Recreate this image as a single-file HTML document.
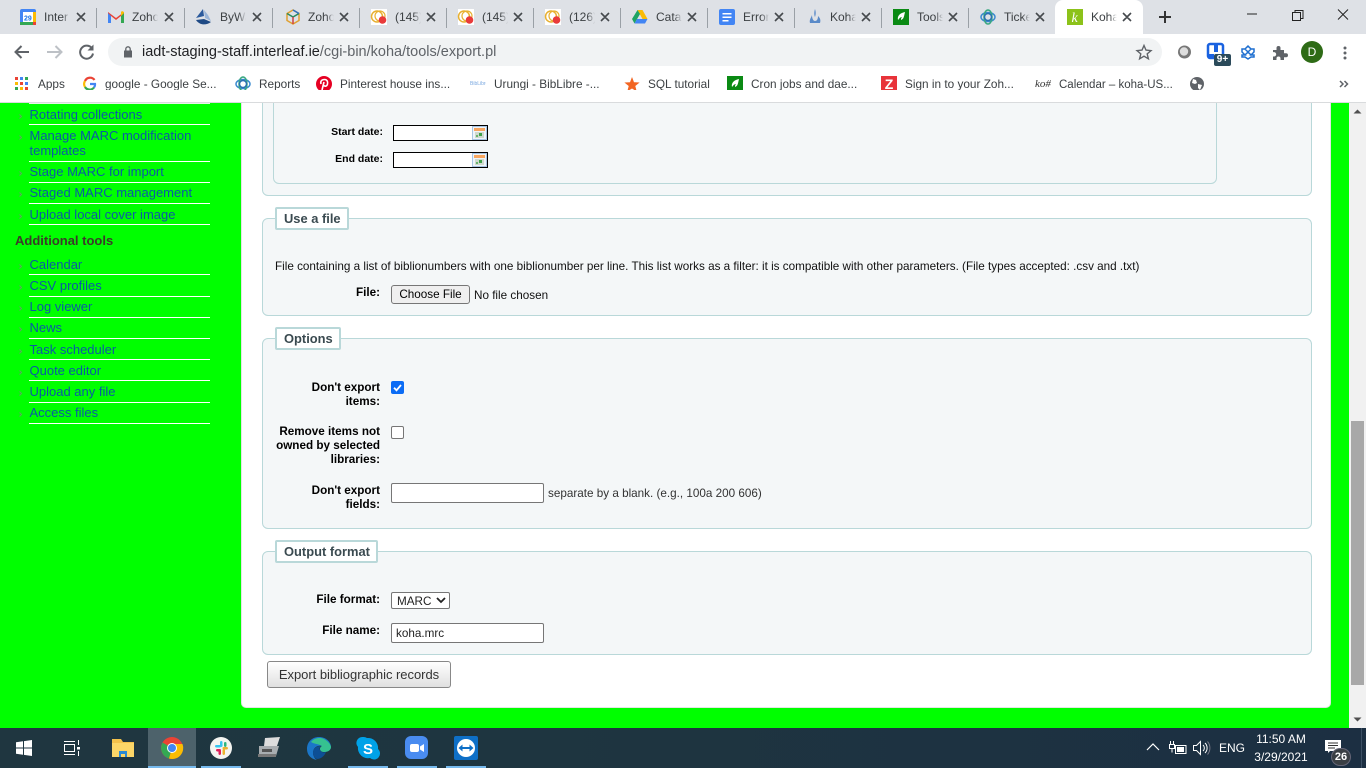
<!DOCTYPE html>
<html><head><meta charset="utf-8"><style>
*{box-sizing:border-box}
html,body{margin:0;padding:0;width:1366px;height:768px;overflow:hidden;background:#0f0;font-family:"Liberation Sans",sans-serif}
.a{position:absolute}
.t{position:absolute;white-space:nowrap}
svg{position:absolute;overflow:visible}
.tt{position:absolute;top:10px;font-size:12px;color:#3c4043;white-space:nowrap;width:26px;overflow:hidden;-webkit-mask-image:linear-gradient(90deg,#000 70%,transparent);mask-image:linear-gradient(90deg,#000 70%,transparent);line-height:15px}
.sep{position:absolute;top:8px;width:1px;height:20px;background:#9aa0a6}
.b{position:absolute;top:76px;font-size:11.8px;color:#3c4043;white-space:nowrap;line-height:16px}
.nav{position:absolute;left:29.5px;font-size:13px;line-height:15px;color:#0a5aa5;white-space:nowrap}
.ln{position:absolute;left:29px;width:181px;height:1px;background:#fff}
.fs{position:absolute;left:262px;width:1050px;background:#f4f7f8;border:1px solid #b9d8d9;border-radius:6px}
.lg{position:absolute;background:#fff;border:2px solid #b9d8d9;border-radius:2px;font-size:12.9px;font-weight:bold;color:#3a4a50;height:23px;line-height:19px;padding:0 6px 0 7px;white-space:nowrap}
.lb{position:absolute;font-size:11.7px;font-weight:bold;color:#000;text-align:right;white-space:nowrap;line-height:14px}
.in{position:absolute;background:#fff;border:1px solid #767676;border-radius:2px;height:20px;font-size:11.7px;color:#222;line-height:20px;padding-left:4px}
</style></head><body>

<!-- tab strip -->
<div class="a" style="left:0;top:0;width:1366px;height:34px;background:#dee1e6"></div>
<div class="sep" style="left:96px"></div><div class="sep" style="left:184px"></div><div class="sep" style="left:272px"></div><div class="sep" style="left:359px"></div><div class="sep" style="left:446px"></div><div class="sep" style="left:533px"></div><div class="sep" style="left:620px"></div><div class="sep" style="left:707px"></div><div class="sep" style="left:794px"></div><div class="sep" style="left:881px"></div><div class="sep" style="left:968px"></div>
<div class="a" style="left:1055px;top:0;width:88px;height:34px;background:#fff;border-radius:8px 8px 0 0"></div>

<div class="tt" style="left:44px">Inter</div>
<div class="tt" style="left:132px">Zoho</div>
<div class="tt" style="left:220px">ByWa</div>
<div class="tt" style="left:308px">Zoho</div>
<div class="tt" style="left:395px">(145)</div>
<div class="tt" style="left:482px">(145)</div>
<div class="tt" style="left:569px">(126)</div>
<div class="tt" style="left:656px">Catal</div>
<div class="tt" style="left:743px">Error</div>
<div class="tt" style="left:830px">Koha</div>
<div class="tt" style="left:917px">Tools</div>
<div class="tt" style="left:1004px">Ticke</div>
<div class="tt" style="left:1091px">Koha</div>

<!-- close icons -->
<svg style="left:0;top:0" width="1366" height="34" fill="none" stroke="#45494d" stroke-width="1.6">
<path d="M77 13l8 8m0-8l-8 8M165 13l8 8m0-8l-8 8M253 13l8 8m0-8l-8 8M340 13l8 8m0-8l-8 8M427 13l8 8m0-8l-8 8M514 13l8 8m0-8l-8 8M601 13l8 8m0-8l-8 8M688 13l8 8m0-8l-8 8M775 13l8 8m0-8l-8 8M862 13l8 8m0-8l-8 8M949 13l8 8m0-8l-8 8M1036 13l8 8m0-8l-8 8M1123 13l8 8m0-8l-8 8"/>
<path d="M1165 11v12M1159 17h12" stroke="#333" stroke-width="2"/>
<path d="M1247 14h10" stroke="#222" stroke-width="1"/>
<path d="M1292.500 12.500h8v8h-8zM1295 12.500v-2h8v8h-2" stroke="#222" stroke-width="1"/>
<path d="M1338 9.500l10 10m0-10l-10 10" stroke="#222" stroke-width="1"/>
</svg>

<!-- favicons -->
<svg style="left:20px;top:9px" width="16" height="16"><rect width="16" height="16" rx="2" fill="#4285f4"/><rect x="3" y="3" width="10" height="10" fill="#fff"/><rect y="13" width="13" height="3" fill="#34a853"/><rect x="13" y="3" width="3" height="10" fill="#fbbc04"/><rect x="13" y="13" width="3" height="3" fill="#ea4335"/><text x="4" y="11.500" font-size="7" font-weight="bold" fill="#1a73e8" font-family="Liberation Sans">29</text></svg>
<svg style="left:108px;top:11px" width="16" height="12"><path d="M0 12V1l8 6 8-6v11h-3V5L8 9 3 5v7z" fill="#ea4335"/><path d="M0 12V2l3 3v7z" fill="#4285f4"/><path d="M13 12V5l3-3v10z" fill="#34a853"/><path d="M13 5l3-3V1l-2-1-1 1z" fill="#fbbc04"/></svg>
<svg style="left:196px;top:9px" width="16" height="16"><path d="M0 9L7 0l1 7z" fill="#2b5a9c"/><path d="M8 1l4 5 3 6-6-3z" fill="#9ab5d8"/><path d="M0 11l8-1 7 3c-4 3-11 4-15-2z" fill="#1f4a85"/></svg>
<svg style="left:285px;top:9px" width="16" height="16" fill="none" stroke-width="1.500"><path d="M8 1l6 3.500v7L8 15l-6-3.500v-7z" stroke="#e0a030"/><path d="M2 4.500L8 8l6-3.500" stroke="#2a8a60"/><path d="M8 8v7" stroke="#d04040"/><path d="M8 1l6 3.500" stroke="#3070c0"/></svg>
<svg style="left:371px;top:9px" width="16" height="16"><rect width="16" height="16" fill="#fff"/><circle cx="6" cy="7.500" r="5.500" fill="none" stroke="#e8b030" stroke-width="1.500"/><circle cx="9" cy="7" r="5" fill="none" stroke="#e8b030" stroke-width="1.200"/><circle cx="11.500" cy="11" r="3.800" fill="#e93a3a"/></svg>
<svg style="left:458px;top:9px" width="16" height="16"><rect width="16" height="16" fill="#fff"/><circle cx="6" cy="7.500" r="5.500" fill="none" stroke="#e8b030" stroke-width="1.500"/><circle cx="9" cy="7" r="5" fill="none" stroke="#e8b030" stroke-width="1.200"/><circle cx="11.500" cy="11" r="3.800" fill="#e93a3a"/></svg>
<svg style="left:545px;top:9px" width="16" height="16"><rect width="16" height="16" fill="#fff"/><circle cx="6" cy="7.500" r="5.500" fill="none" stroke="#e8b030" stroke-width="1.500"/><circle cx="9" cy="7" r="5" fill="none" stroke="#e8b030" stroke-width="1.200"/><circle cx="11.500" cy="11" r="3.800" fill="#e93a3a"/></svg>
<svg style="left:632px;top:9px" width="16" height="15"><path d="M5.500 1h5l5 9h-5z" fill="#fbbc04"/><path d="M5.500 1L0 10l2.500 4.500L8 5z" fill="#1fa463"/><path d="M2.500 14.500h10.500l2.500-4.500H5z" fill="#4285f4"/></svg>
<svg style="left:719px;top:9px" width="16" height="16"><rect width="16" height="16" rx="2" fill="#4285f4"/><path d="M3.500 4h9v1.500h-9zM3.500 7.500h9V9h-9zM3.500 11h6v1.500h-6z" fill="#fff"/></svg>
<svg style="left:807px;top:9px" width="16" height="16"><path d="M8 0c1 3 1 5 0 8-1-2-1-5 0-8zM5 6c-1 3-3 5-2 8h10c1-3 0-5-2-7 0 3-1 5-3 5s-3-3-3-6z" fill="#5a8ac8"/></svg>
<svg style="left:893px;top:9px" width="16" height="16"><rect width="16" height="16" fill="#0a8a14"/><path d="M5 11c-1-4 2-7 7-8-1 4-1 7-4 8 0-1 0-2 1-3-2 0-3 2-4 3z" fill="#fff"/></svg>
<svg style="left:980px;top:9px" width="16" height="16" fill="none" stroke-width="1.500"><ellipse cx="8" cy="8" rx="7" ry="4.500" stroke="#3a8ad0"/><ellipse cx="8" cy="8" rx="4" ry="7" stroke="#3aa880"/><circle cx="8" cy="8" r="3.500" stroke="#2a70b0"/></svg>
<svg style="left:1067px;top:9px" width="16" height="16"><rect width="16" height="16" fill="#8cc21a"/><text x="4.500" y="13" font-size="14" font-style="italic" font-family="Liberation Serif" fill="#fff">k</text></svg>

<!-- toolbar -->
<div class="a" style="left:0;top:34px;width:1366px;height:68px;background:#fff"></div>
<svg style="left:0;top:34px" width="110" height="34" fill="none">
<path d="M29 18H16M21.500 12l-6 6 6 6" stroke="#5f6368" stroke-width="2"/>
<path d="M47 18h13M55.500 12l6 6-6 6" stroke="#bdc1c6" stroke-width="2"/>
<path d="M92 14.500a6.500 6.500 0 1 0 1 5" stroke="#5f6368" stroke-width="2"/><path d="M93.500 10.500v6h-6z" fill="#5f6368"/>
</svg>
<div class="a" style="left:108px;top:38px;width:1054px;height:28px;background:#f1f3f4;border-radius:14px"></div>
<svg style="left:122px;top:45px" width="12" height="14"><path d="M2 5.500h8v7H2z" fill="#5f6368"/><path d="M3.800 6V4a2.200 2.200 0 0 1 4.400 0v2" fill="none" stroke="#5f6368" stroke-width="1.300"/></svg>
<div class="t" style="left:142px;top:44px;font-size:14.5px;line-height:17px;color:#202124">iadt-staging-staff.interleaf.ie<span style="color:#5f6368">/cgi-bin/koha/tools/export.pl</span></div>
<svg style="left:1136px;top:44px" width="16" height="16"><path d="M8 1.500l2 4.600 5 .5-3.800 3.300 1.200 4.900L8 12.200l-4.400 2.600 1.200-4.900L1 6.600l5-.5z" fill="none" stroke="#5f6368" stroke-width="1.400"/></svg>
<svg style="left:1177px;top:45px" width="15" height="15"><circle cx="7.500" cy="7" r="6.500" fill="#777"/><circle cx="7" cy="6.500" r="4.200" fill="#ddd"/></svg>
<svg style="left:1207px;top:43px" width="24" height="24"><path d="M3 1h11a2 2 0 0 1 2 2v10a2 2 0 0 1-2 2H3a2 2 0 0 1-2-2V3a2 2 0 0 1 2-2z" fill="none" stroke="#1a62e0" stroke-width="2.500"/><rect x="7" y="2" width="4" height="7" fill="#1a62e0"/><rect x="2" y="11" width="5" height="4" fill="#1a62e0"/></svg>
<div class="a" style="left:1214px;top:54px;width:17px;height:12px;background:#2b4a5a;border-radius:2px;color:#fff;font-size:10px;font-weight:bold;line-height:12px;text-align:center">9+</div>
<svg style="left:1241px;top:45px" width="14" height="14" fill="none" stroke="#1e6fd0" stroke-width="1.500"><path d="M7 1L4 4H1v3l-0 0 3 3-3 0v2h3l3 2 3-2h3v-2l-3 0 3-3V4h-3zM4 4l6 6M10 4L4 10"/></svg>
<svg style="left:1272px;top:45px" width="15" height="15"><path d="M1 5h3.500V3a2 2 0 0 1 4 0v2H12v3.200h2a2 2 0 0 1 0 4h-2V15H8.500v-1.500a2 2 0 0 0-4 0V15H1v-3.500h1a2.200 2.200 0 0 0 0-4.400H1z" fill="#5f6368"/></svg>
<div class="a" style="left:1301px;top:41px;width:22px;height:22px;border-radius:50%;background:#2e6b16;color:#fff;font-size:12px;line-height:22px;text-align:center">D</div>
<svg style="left:1343px;top:45px" width="4" height="16"><circle cx="2" cy="3" r="1.500" fill="#5f6368"/><circle cx="2" cy="8" r="1.500" fill="#5f6368"/><circle cx="2" cy="13" r="1.500" fill="#5f6368"/></svg>

<!-- bookmarks -->
<svg style="left:15px;top:77px" width="14" height="14"><g><rect x="0" y="0" width="3" height="3" fill="#ea4335"/><rect x="5" y="0" width="3" height="3" fill="#4285f4"/><rect x="10" y="0" width="3" height="3" fill="#34a853"/><rect x="0" y="5" width="3" height="3" fill="#fbbc04"/><rect x="5" y="5" width="3" height="3" fill="#ea4335"/><rect x="10" y="5" width="3" height="3" fill="#4285f4"/><rect x="0" y="10" width="3" height="3" fill="#34a853"/><rect x="5" y="10" width="3" height="3" fill="#fbbc04"/><rect x="10" y="10" width="3" height="3" fill="#ea4335"/></g></svg>
<div class="b" style="left:38px">Apps</div>
<svg style="left:83px;top:77px" width="13" height="14" fill="none" stroke-width="2.200"><path d="M11.500 3A5.500 5.500 0 0 0 2 4" stroke="#ea4335"/><path d="M2 4a5.800 5.800 0 0 0 0 6" stroke="#fbbc04"/><path d="M2 10a5.500 5.500 0 0 0 9 .5" stroke="#34a853"/><path d="M11 10.500a5 5 0 0 0 1-3.500H7" stroke="#4285f4"/></svg>
<div class="b" style="left:105px">google - Google Se...</div>
<svg style="left:235px;top:76px" width="16" height="16" fill="none" stroke-width="1.500"><ellipse cx="8" cy="8" rx="7" ry="4.500" stroke="#3a8ad0"/><ellipse cx="8" cy="8" rx="4" ry="7" stroke="#3aa880"/><circle cx="8" cy="8" r="3.500" stroke="#2a70b0"/></svg>
<div class="b" style="left:259px">Reports</div>
<svg style="left:316px;top:76px" width="16" height="16"><circle cx="8" cy="8" r="8" fill="#e60023"/><path d="M6 14l2-8M5 8c-1-3 1-4.500 3.500-4.500S12 5.500 11.500 8 9 10.500 7.800 9.500" fill="none" stroke="#fff" stroke-width="1.600"/></svg>
<div class="b" style="left:340px">Pinterest house ins...</div>
<div class="a" style="left:470px;top:80px;width:16px;height:8px;font-size:5px;color:#7aa8e0;line-height:8px;white-space:nowrap;overflow:hidden">BibLibre</div>
<div class="b" style="left:494px">Urungi - BibLibre -...</div>
<svg style="left:624px;top:77px" width="16" height="15"><path d="M8 0l2 5.200 5.600.3-4.300 3.500 1.400 5.400L8 11.500l-4.700 2.900 1.400-5.400L.4 5.500 6 5.200z" fill="#f26522"/></svg>
<div class="b" style="left:648px">SQL tutorial</div>
<svg style="left:727px;top:76px" width="16" height="16"><rect width="16" height="16" fill="#0a8a14"/><path d="M5 11c-1-4 2-7 7-8-1 4-1 7-4 8 0-1 0-2 1-3-2 0-3 2-4 3z" fill="#fff"/></svg>
<div class="b" style="left:751px">Cron jobs and dae...</div>
<div class="a" style="left:881px;top:76px;width:16px;height:16px;background:#e8333a;color:#fff;font-size:14px;font-weight:bold;line-height:16px;text-align:center">Z</div>
<div class="b" style="left:905px">Sign in to your Zoh...</div>
<div class="a" style="left:1035px;top:76px;width:16px;height:16px;font-size:11px;font-style:italic;color:#333;line-height:16px;overflow:hidden;font-family:'Liberation Serif',serif;white-space:nowrap">ko#k</div>
<div class="b" style="left:1059px;font-size:11.5px;top:77px">Calendar – koha-US...</div>
<svg style="left:1190px;top:77px" width="14" height="14"><circle cx="7" cy="7" r="7" fill="#5f6368"/><path d="M3 2l3 1 1 3-2 1-3-1zM8 7l4 1-2 5-2-2z" fill="#fff"/></svg>
<svg style="left:1339px;top:80px" width="10" height="8" fill="none" stroke="#5f6368" stroke-width="1.500"><path d="M1 1l3 3-3 3M5.500 1l3 3-3 3"/></svg>

<!-- sidebar -->
<div class="ln" style="top:103px;background:#e6f8e6"></div>
<div class="nav" style="top:107px">Rotating collections</div><div class="ln" style="top:124px"></div>
<div class="nav" style="top:128px">Manage MARC modification<br>templates</div><div class="ln" style="top:161px"></div>
<div class="nav" style="top:164px">Stage MARC for import</div><div class="ln" style="top:182px"></div>
<div class="nav" style="top:185px">Staged MARC management</div><div class="ln" style="top:203px"></div>
<div class="nav" style="top:207px">Upload local cover image</div><div class="ln" style="top:224px"></div>
<div class="t" style="left:15px;top:233px;font-size:13px;line-height:15px;font-weight:bold;color:#3d3a2a">Additional tools</div>
<div class="nav" style="top:257px">Calendar</div><div class="ln" style="top:274px"></div>
<div class="nav" style="top:278px">CSV profiles</div><div class="ln" style="top:296px"></div>
<div class="nav" style="top:299px">Log viewer</div><div class="ln" style="top:317px"></div>
<div class="nav" style="top:320px">News</div><div class="ln" style="top:338px"></div>
<div class="nav" style="top:342px">Task scheduler</div><div class="ln" style="top:359px"></div>
<div class="nav" style="top:363px">Quote editor</div><div class="ln" style="top:380px"></div>
<div class="nav" style="top:384px">Upload any file</div><div class="ln" style="top:402px"></div>
<div class="nav" style="top:405px">Access files</div><div class="ln" style="top:423px"></div>
<svg style="left:0;top:0" width="30" height="430" fill="none" stroke="#5fa55f" stroke-width="1"><path d="M19.500 114.500l2 2-2 2M19.500 135.500l2 2-2 2M19.500 171.500l2 2-2 2M19.500 192.500l2 2-2 2M19.500 214.500l2 2-2 2M19.500 264.500l2 2-2 2M19.500 285.500l2 2-2 2M19.500 306.500l2 2-2 2M19.500 327.500l2 2-2 2M19.500 349.500l2 2-2 2M19.500 370.500l2 2-2 2M19.500 391.500l2 2-2 2M19.500 412.500l2 2-2 2"/></svg>

<!-- main panel -->
<div class="a" style="left:241px;top:103px;width:1090px;height:605px;background:#fff;border-radius:0 0 5px 5px;border:1px solid #e4e4e4;border-top:0"></div>

<div class="fs" style="top:90px;height:106px"></div>
<div class="a" style="left:273px;top:90px;width:944px;height:94px;border:1px solid #b9d8d9;border-radius:6px"></div>
<div class="a" style="left:0;top:90px;width:1366px;height:12px;background:#fff"></div>
<div class="a" style="left:0;top:102px;width:1366px;height:1px;background:#d9dbdd"></div>
<div class="lb" style="left:300px;width:83px;top:125px;font-size:10.5px">Start date:</div>
<div class="lb" style="left:300px;width:83px;top:152px;font-size:10.5px">End date:</div>
<div class="a" style="left:393px;top:125px;width:95px;height:16px;background:#fff;border:1px solid #000"></div>
<div class="a" style="left:393px;top:152px;width:95px;height:16px;background:#fff;border:1px solid #000"></div>
<svg style="left:472px;top:126px" width="15" height="14"><rect x=".5" y=".5" width="14" height="13" fill="#eef4fa" stroke="#a9c6e4"/><rect x="2" y="2" width="11" height="3" fill="#f7a660"/><rect x="3" y="6" width="9" height="6" fill="#cfd9cf"/><rect x="7" y="7" width="3" height="3" fill="#3fa24a"/><rect x="4" y="9" width="2" height="2" fill="#6ab46e"/></svg>
<svg style="left:472px;top:153px" width="15" height="14"><rect x=".5" y=".5" width="14" height="13" fill="#eef4fa" stroke="#a9c6e4"/><rect x="2" y="2" width="11" height="3" fill="#f7a660"/><rect x="3" y="6" width="9" height="6" fill="#cfd9cf"/><rect x="7" y="7" width="3" height="3" fill="#3fa24a"/><rect x="4" y="9" width="2" height="2" fill="#6ab46e"/></svg>

<div class="fs" style="top:218px;height:98px"></div>
<div class="lg" style="left:275px;top:207px">Use a file</div>
<div class="t" style="left:275px;top:260px;font-size:11.7px;line-height:14px;color:#111">File containing a list of biblionumbers with one biblionumber per line. This list works as a filter: it is compatible with other parameters. (File types accepted: .csv and .txt)</div>
<div class="lb" style="left:300px;width:80px;top:286px">File:</div>
<div class="a" style="left:391px;top:285px;width:79px;height:19px;background:#efefef;border:1px solid #767676;border-radius:3px;font-size:11.7px;line-height:18px;text-align:center;color:#000">Choose File</div>
<div class="t" style="left:474px;top:289px;font-size:11.7px;line-height:14px;color:#111">No file chosen</div>

<div class="fs" style="top:338px;height:191px"></div>
<div class="lg" style="left:275px;top:327px">Options</div>
<div class="lb" style="left:270px;width:110px;top:381px">Don't export<br>items:</div>
<svg style="left:391px;top:381px" width="13" height="13"><rect width="13" height="13" rx="2" fill="#0b6cf5"/><path d="M3 6.800l2.500 2.500L10 4" fill="none" stroke="#fff" stroke-width="1.800"/></svg>
<div class="lb" style="left:270px;width:110px;top:425px">Remove items not<br>owned by selected<br>libraries:</div>
<div class="a" style="left:391px;top:426px;width:13px;height:13px;background:#fff;border:1px solid #767676;border-radius:2px"></div>
<div class="lb" style="left:270px;width:110px;top:484px">Don't export<br>fields:</div>
<div class="in" style="left:391px;top:483px;width:153px"></div>
<div class="t" style="left:548px;top:487px;font-size:11.7px;line-height:14px;color:#333">separate by a blank. (e.g., 100a 200 606)</div>

<div class="fs" style="top:551px;height:104px"></div>
<div class="lg" style="left:275px;top:540px">Output format</div>
<div class="lb" style="left:270px;width:110px;top:593px">File format:</div>
<div class="in" style="left:391px;top:592px;width:59px;height:17px;line-height:17px;padding-left:5px">MARC</div>
<svg style="left:436px;top:597px" width="10" height="7"><path d="M1 1l4 4 4-4" fill="none" stroke="#222" stroke-width="1.800"/></svg>
<div class="lb" style="left:270px;width:110px;top:624px">File name:</div>
<div class="in" style="left:391px;top:623px;width:153px">koha.mrc</div>
<div class="a" style="left:267px;top:661px;width:184px;height:27px;background:linear-gradient(#fff,#e0e0e0);border:1px solid #888;border-radius:3px;font-size:13px;line-height:26px;text-align:center;color:#333;letter-spacing:-.03px">Export bibliographic records</div>

<!-- scrollbar -->
<div class="a" style="left:1349px;top:103px;width:17px;height:625px;background:#f1f1f1"></div>
<div class="a" style="left:1351px;top:421px;width:13px;height:264px;background:#a8a8a8"></div>
<svg style="left:1349px;top:103px" width="17" height="625"><path d="M4.500 10.500L8.500 6.500l4 4z" fill="#505050"/><path d="M4.500 614.500l4 4 4-4z" fill="#505050"/></svg>

<!-- taskbar -->
<div class="a" style="left:0;top:728px;width:1366px;height:40px;background:linear-gradient(90deg,#1f3640,#1e3540 40%,#1c2f42)"></div>
<div class="a" style="left:148px;top:728px;width:48px;height:40px;background:#4d626b"></div>
<div class="a" style="left:148px;top:766px;width:48px;height:2px;background:#76b9ed"></div>
<div class="a" style="left:201px;top:766px;width:40px;height:2px;background:#76b9ed"></div>
<div class="a" style="left:348px;top:766px;width:40px;height:2px;background:#76b9ed"></div>
<div class="a" style="left:397px;top:766px;width:40px;height:2px;background:#76b9ed"></div>
<div class="a" style="left:446px;top:766px;width:40px;height:2px;background:#76b9ed"></div>
<svg style="left:16px;top:740px" width="16" height="16"><path d="M0 2.300l7-1v6.200H0zM8 1.100L16 0v7.500H8zM0 8.500h7v6.200l-7-1zM8 8.500h8V16l-8-1.100z" fill="#fff"/></svg>
<svg style="left:64px;top:740px" width="17" height="16" fill="none" stroke="#fff"><path d="M.500 4.500h10v7H.500zM0 1.500h11M0 14.500h11M14.500 0v5M14.500 11v5"/><rect x="13" y="7" width="3" height="2.500" fill="#fff" stroke="none"/></svg>
<svg style="left:112px;top:738px" width="22" height="19"><path d="M0 1h9l2 3h11v15H0z" fill="#f3c14b"/><path d="M0 5h22v14H0z" fill="#fbd668"/><path d="M7 13h8v6H7z" fill="#2a8ad4"/><path d="M9 16h4v3H9z" fill="#fbd668"/></svg>
<svg style="left:161px;top:737px" width="22" height="22"><circle cx="11" cy="11" r="11" fill="#ea4335"/><path d="M11 11L1.500 5.500A11 11 0 0 0 8 21.500z" fill="#34a853"/><path d="M11 11l-3 10.500A11 11 0 0 0 21.500 7H11z" fill="#fbbc04"/><circle cx="11" cy="11" r="5" fill="#fff"/><circle cx="11" cy="11" r="4" fill="#4285f4"/></svg>
<svg style="left:210px;top:737px" width="22" height="22"><circle cx="11" cy="11" r="11" fill="#f4f4f0"/><rect x="10" y="4" width="2.500" height="6" rx="1.200" fill="#36c5f0"/><rect x="5" y="8" width="6" height="2.500" rx="1.200" fill="#36c5f0"/><rect x="12.500" y="10" width="5.500" height="2.500" rx="1.200" fill="#ecb22e"/><rect x="12.500" y="12" width="2.500" height="6" rx="1.200" fill="#ecb22e"/><rect x="6" y="12" width="5" height="2.500" rx="1.200" fill="#e01e5a"/><rect x="8.500" y="13" width="2.500" height="5" rx="1.200" fill="#e01e5a"/><rect x="14" y="5" width="2.500" height="5" rx="1.200" fill="#2eb67d"/></svg>
<svg style="left:258px;top:737px" width="23" height="21"><path d="M7 1l15-1-3 9H6z" fill="#ddd"/><path d="M1 9h20l-3 10H1z" fill="#a8adb0"/><path d="M4 12h10v3H4z" fill="#555"/><path d="M0 17h18v3H0z" fill="#777"/></svg>
<svg style="left:307px;top:737px" width="24" height="23"><path d="M0 12C0 5 5 0 12 0s12 5 12 10c0 3-3 5-7 5-3 0-4-2-4-3 0-2 2-3 2-3-4-1-9 1-9 7 0 3 2 6 4 7C4 22 0 18 0 12z" fill="#1b76c8"/><path d="M4 5c3-4 9-5 13-3s7 6 7 8c0 3-3 5-7 5-3 0-4-2-4-3 0-2 2-3 2-3-3-2-8-2-11-4z" fill="#36c190"/><path d="M6 16c0-5 4-7 8-7-1 1-2 2-1 4 1 2 3 3 6 2-2 5-6 7-9 7-2-1-4-3-4-6z" fill="#0d4f95"/></svg>
<svg style="left:357px;top:737px" width="22" height="22"><path d="M6 0a6 6 0 0 1 4 1 10 10 0 0 1 11 11 6 6 0 0 1-8 9A10 10 0 0 1 1 10 6 6 0 0 1 6 0z" fill="#00a2e8"/><text x="6" y="17" font-family="Liberation Sans" font-size="15" font-weight="bold" fill="#fff">S</text></svg>
<svg style="left:405px;top:736px" width="23" height="23"><rect width="23" height="23" rx="6" fill="#4a8cf0"/><rect x="5" y="8" width="9" height="8" rx="2" fill="#fff"/><path d="M15 10.500l4-2.500v8l-4-2.500z" fill="#fff"/></svg>
<svg style="left:454px;top:736px" width="24" height="24"><rect width="24" height="24" rx="2" fill="#0e6fc7"/><circle cx="12" cy="12" r="9" fill="#fff"/><path d="M4.500 12l4-3.500V11h7V8.500l4 3.500-4 3.500V13h-7v2.500z" fill="#0e6fc7"/></svg>

<svg style="left:1146px;top:742px" width="14" height="10"><path d="M1 8l6-6 6 6" fill="none" stroke="#fff" stroke-width="1.200"/></svg>
<svg style="left:1169px;top:741px" width="18" height="14" fill="none" stroke="#fff"><path d="M.500 3.500h5v4h-5zM3 7.500v4M1.500 3.500V0M4.500 3.500V0"/><path d="M6.500 4.500h10.500v8H6.500z"/><rect x="8" y="6" width="7" height="5" fill="#fff" stroke="none"/></svg>
<svg style="left:1193px;top:741px" width="17" height="14" fill="none" stroke="#fff"><path d="M.500 4.500h3l4-4v13l-4-4h-3z"/><path d="M10 4a4 4 0 0 1 0 6M12 2a7 7 0 0 1 0 10"/><path d="M14.500 .500a10 10 0 0 1 0 13" stroke="#778"/></svg>
<div class="t" style="left:1219px;top:741px;font-size:12px;line-height:14px;color:#fff">ENG</div>
<div class="t" style="left:1250px;top:732px;width:62px;text-align:center;font-size:12px;line-height:15px;color:#fff">11:50 AM</div>
<div class="t" style="left:1250px;top:750px;width:62px;text-align:center;font-size:12px;line-height:15px;color:#fff">3/29/2021</div>
<svg style="left:1325px;top:740px" width="17" height="14"><path d="M0 0h16v11H5l-2 2v-2H0z" fill="#fff"/><path d="M3 3h10M3 5.500h10M3 8h7" stroke="#333"/></svg>
<div class="a" style="left:1331px;top:748px;width:20px;height:18px;border-radius:9px;background:#3a3f44;border:1px solid #667;color:#fff;font-size:11px;font-weight:bold;line-height:16px;text-align:center">26</div>
<div class="a" style="left:1361px;top:728px;width:1px;height:40px;background:#3d5064"></div>
</body></html>
